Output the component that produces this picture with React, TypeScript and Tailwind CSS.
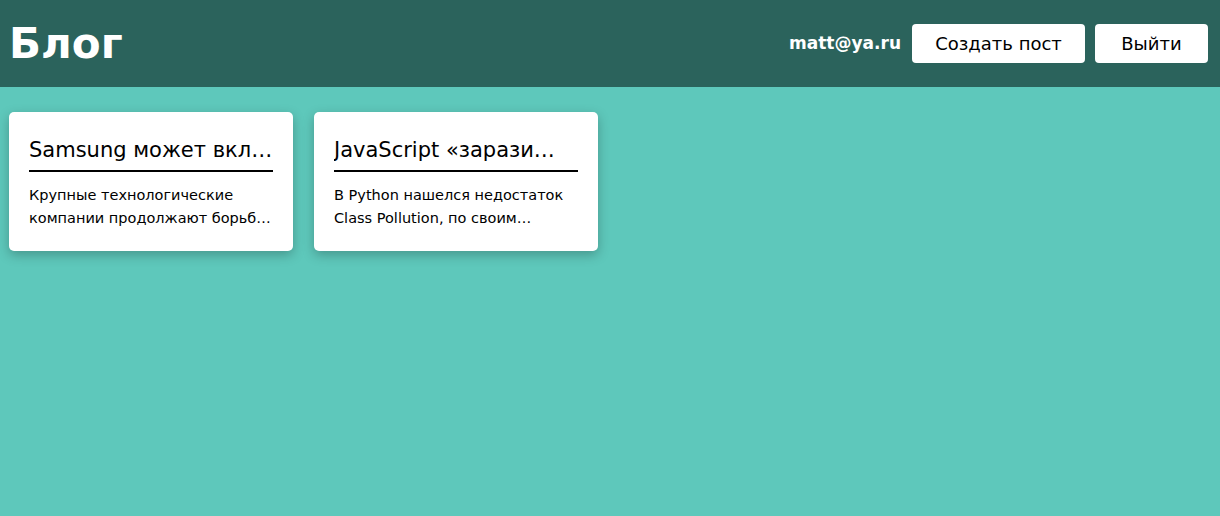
const posts = [
  {
    id: 1,
    title: "Samsung может вкл…",
    text: "Крупные технологические компании продолжают борьб…",
  },
  {
    id: 2,
    title: "JavaScript «зарази…",
    text: "В Python нашелся недостаток Class Pollution, по своим…",
  },
];

function PostCard({ title, text }: { title: string; text: string }) {
  return (
    <div className="h-[139px] w-[284px] rounded-[5px] bg-white px-5 pt-[22px] shadow-[0_4px_12px_rgba(0,0,0,0.25)]">
      <h2 className="truncate border-b-2 border-black pb-[4px] text-[21px] leading-[32px] text-black">{title}</h2>
      <p className="mt-[12px] line-clamp-2 text-[14.5px] leading-[23px] text-black">{text}</p>
    </div>
  );
}

export default function App() {
  return (
    <div className="min-h-[516px] bg-[#5ec8bb] font-['Comic_Sans_MS','DejaVu_Sans',sans-serif]">
      <header className="flex h-[87px] items-center justify-between bg-[#2b635c] pl-[9px] pr-3">
        <h1 className="text-[42px] font-bold leading-none text-white">Блог</h1>
        <div className="flex items-center gap-[10px]">
          <span className="mr-[1px] text-[17px] font-bold text-white">matt@ya.ru</span>
          <button className="h-[39px] w-[173px] rounded-[4px] bg-white text-[18px] text-black">Создать пост</button>
          <button className="h-[39px] w-[113px] rounded-[4px] bg-white text-[18px] text-black">Выйти</button>
        </div>
      </header>
      <main className="flex gap-[21px] px-[9px] pt-[25px]">
        {posts.map((post) => (
          <PostCard key={post.id} title={post.title} text={post.text} />
        ))}
      </main>
    </div>
  );
}
